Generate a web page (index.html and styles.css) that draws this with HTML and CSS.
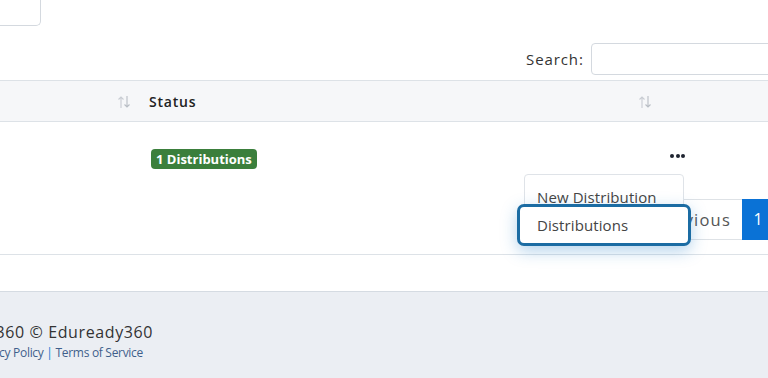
FILE: index.html
```html
<!DOCTYPE html>
<html lang="en">
<head>
<meta charset="utf-8">
<title>Distributions</title>
<link rel="stylesheet" href="styles.css">
</head>
<body>
<div class="page">
  <div class="card">
    <div class="top-field"></div>
    <div class="search-row">
      <label class="search-label" for="q">Search:</label>
      <input class="search-input" id="q" type="search">
    </div>
    <div class="grid head">
      <div class="cell c1">
        <span class="sort"><svg width="14" height="14" viewBox="0 0 14 14"><path d="M4 13V2M1.5 4.5L4 2l2.5 2.5" stroke="#c9cdd3" stroke-width="1.1" fill="none"/><path d="M10 1v11M7.5 9.5L10 12l2.5-2.5" stroke="#b9bec5" stroke-width="1.1" fill="none"/></svg></span>
      </div>
      <div class="cell c2">
        <span class="th">Status</span>
        <span class="sort"><svg width="14" height="14" viewBox="0 0 14 14"><path d="M4 13V2M1.5 4.5L4 2l2.5 2.5" stroke="#c9cdd3" stroke-width="1.1" fill="none"/><path d="M10 1v11M7.5 9.5L10 12l2.5-2.5" stroke="#b9bec5" stroke-width="1.1" fill="none"/></svg></span>
      </div>
      <div class="cell c3"></div>
    </div>
    <div class="grid body">
      <div class="cell c1"></div>
      <div class="cell c2"><span class="badge">1 Distributions</span></div>
      <div class="cell c3">
        <button class="dots" type="button"><i></i><i></i><i></i></button>
        <div class="menu">
          <a class="item">New Distribution</a>
          <a class="item focused">Distributions</a>
        </div>
      </div>
    </div>
    <div class="pager">
      <span class="pg prev">Previous</span>
      <span class="pg active">1</span>
    </div>
  </div>
  <footer class="footer">
    <div class="line1"><span>Eduready360 © Eduready360</span></div>
    <div class="line2"><span><a>Privacy Policy</a> <b>|</b> <a>Terms of Service</a></span></div>
  </footer>
</div>
</body>
</html>
```
FILE: styles.css
```css
html, body {
  margin: 0;
  padding: 0;
  overflow: hidden;
  width: 768px;
  height: 378px;
  background: #fff;
}
body {
  font-family: "Open Sans", "Liberation Sans", sans-serif;
  color: #333;
}
.page {
  width: 768px;
}
.card {
  width: 774px;
  border-bottom: 1px solid #dde2e7;
  padding-bottom: 14px;
}
.top-field {
  width: 40px;
  height: 25px;
  border: 1px solid #d4d9df;
  border-top: none;
  border-left: none;
  border-radius: 0 0 5px 0;
}
.search-row {
  display: flex;
  justify-content: flex-start;
  align-items: center;
  margin-top: 17px;
  margin-bottom: 5px;
  padding-left: 526px;
  gap: 7px;
  height: 32px;
}
.search-label {
  font-size: 15px;
  color: #333;
  letter-spacing: 0.9px;
}
.search-input {
  flex: none;
  box-sizing: border-box;
  width: 220px;
  height: 32px;
  border: 1px solid #d4d9df;
  border-radius: 4px;
  margin: 0;
}
.grid {
  display: grid;
  grid-template-columns: 140px 520px 1fr;
}
.head {
  background: #f6f7f9;
  border-top: 1px solid #dde2e7;
  border-bottom: 1px solid #dde2e7;
  height: 40px;
}
.head .cell {
  display: flex;
  align-items: center;
  justify-content: space-between;
}
.head .c1 {
  justify-content: flex-end;
  padding-right: 9px;
}
.head .c2 {
  padding-left: 9px;
  padding-right: 8px;
}
.th {
  font-weight: 600;
  font-size: 14px;
  color: #222;
  letter-spacing: 0.8px;
}
.sort {
  display: flex;
  padding-top: 2px;
}
.body {
  height: 68px;
}
.body .c2 {
  padding-top: 25px;
  padding-left: 11px;
}
.badge {
  display: inline-block;
  background: #3b7f3c;
  color: #fff;
  font-weight: 700;
  font-size: 13px;
  line-height: 20px;
  padding: 0 5px;
  border-radius: 4px;
  letter-spacing: 0;
}
.body .c3 {
  position: relative;
  padding-left: 10px;
}
.dots {
  display: flex;
  gap: 1.5px;
  border: none;
  background: none;
  padding: 0;
  margin-top: 32px;
}
.dots i {
  width: 4px;
  height: 4px;
  border-radius: 50%;
  background: #1e2430;
}
.menu {
  position: absolute;
  top: 52px;
  left: -136px;
  width: 160px;
  height: 69px;
  background: #fff;
  border: 1px solid #dfe3e8;
  border-radius: 4px;
  padding-top: 7px;
  box-sizing: border-box;
  z-index: 2;
  font-size: 15px;
  color: #444;
  letter-spacing: 0.1px;
}
.item {
  display: block;
  padding-left: 12px;
  line-height: 30px;
  height: 30px;
  white-space: nowrap;
}
.item.focused {
  margin: -8px -8px 0 -8px;
  padding-left: 17px;
  height: 36px;
  line-height: 36px;
  border: 3px solid #1b6ca3;
  border-radius: 7px;
  background: #fff;
  box-shadow: 0 5px 16px rgba(40, 130, 200, 0.35);
}
.pager {
  display: flex;
  justify-content: flex-end;
  margin-top: 9px;
}
.pg {
  box-sizing: border-box;
  height: 41px;
  line-height: 39px;
  font-size: 16px;
  padding: 0 12px;
  border: 1px solid #dee2e6;
}
.prev {
  color: #555;
  border-right: none;
  font-size: 16.5px;
  letter-spacing: 1.2px;
  padding-right: 11px;
}
.active {
  width: 32px;
  padding: 0;
  text-align: center;
  background: #0a72d6;
  border-color: #0a72d6;
  color: #fff;
}
.footer {
  margin-top: 36px;
  border-top: 1px solid #d5dbe2;
  background: #ebeef3;
  height: 90px;
  padding-top: 28px;
  box-sizing: border-box;
}
.line1, .line2 {
  display: flex;
  justify-content: flex-end;
  white-space: nowrap;
}
.line1 {
  width: 153px;
  font-size: 16px;
  line-height: 24px;
  color: #333;
  letter-spacing: 0.6px;
}
.line2 {
  width: 143px;
  font-size: 12px;
  line-height: 18px;
  color: #3f5f8c;
  letter-spacing: -0.3px;
}
.line2 b {
  font-weight: 400;
  color: #1a7ad4;
}
```
